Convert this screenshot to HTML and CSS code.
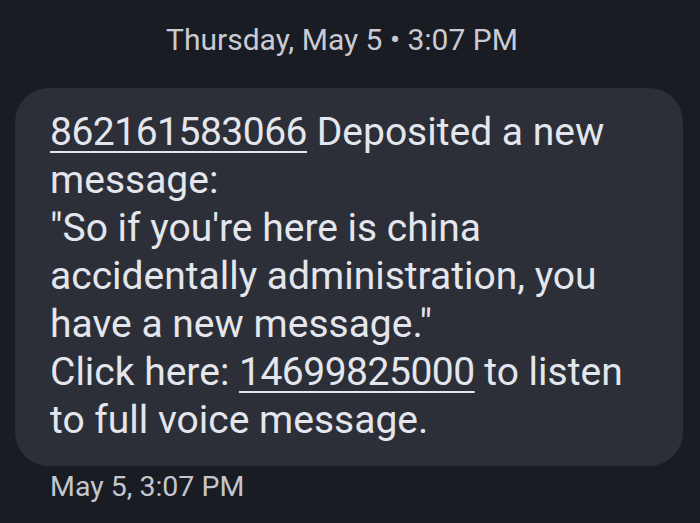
FILE: index.html
```html
<!DOCTYPE html>
<html lang="en">
<head>
    <meta charset="UTF-8">
    <meta name="viewport" content="width=device-width, initial-scale=1.0">
    <title>Messages</title>
    <link rel="stylesheet" href="styles.css">
</head>
<body>
    <div class="thread">
        <div class="date-header">Thursday, May 5 &bull; 3:07 PM</div>

        <div class="bubble">
            <p class="msg-text"><a class="num-link" href="#">862161583066</a> Deposited a new message:<br>"So if you're here is china accidentally administration, you have a new message."<br>Click here: <a class="num-link" href="#">14699825000</a> to listen to full voice message.</p>
        </div>

        <div class="msg-time">May 5, 3:07 PM</div>
    </div>
</body>
</html>
```

FILE: styles.css
```css
body {
    margin: 0;
    background-color: #191c23;
    font-family: Roboto, "Liberation Sans", sans-serif;
    color: #e4e6ee;
}

.thread {
    padding: 20px 17px 0 15px;
}

.date-header {
    text-align: center;
    color: #c9cbd4;
    font-size: 30px;
    line-height: 40px;
    margin-bottom: 28px;
    padding-right: 14px;
}

.bubble {
    background-color: #2c2f37;
    border-radius: 34px;
    padding: 20px 42px 22px 35px;
}

.msg-text {
    margin: 0;
    font-size: 39px;
    line-height: 48px;
}

.num-link {
    color: inherit;
    letter-spacing: -0.5px;
    text-decoration: underline;
    text-decoration-thickness: 2px;
    text-underline-offset: 6px;
}

.msg-time {
    color: #c4c6cf;
    font-size: 28.5px;
    line-height: 30px;
    padding: 6px 0 0 35px;
}
```
